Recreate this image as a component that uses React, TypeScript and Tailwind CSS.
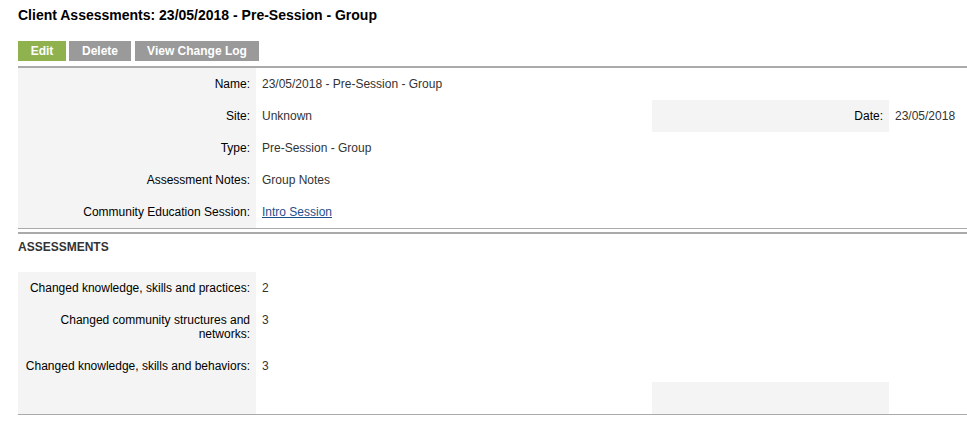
import React from 'react';

type Row = { label: string; value: React.ReactNode; label2?: string; value2?: string };

const details: Row[] = [
  { label: 'Name:', value: '23/05/2018 - Pre-Session - Group' },
  { label: 'Site:', value: 'Unknown', label2: 'Date:', value2: '23/05/2018' },
  { label: 'Type:', value: 'Pre-Session - Group' },
  { label: 'Assessment Notes:', value: 'Group Notes' },
  {
    label: 'Community Education Session:',
    value: (
      <a href="#" className="text-[#1f4e8c] underline">
        Intro Session
      </a>
    ),
  },
];

const scores = [
  { label: 'Changed knowledge, skills and practices:', value: '2' },
  { label: 'Changed community structures and networks:', value: '3' },
  { label: 'Changed knowledge, skills and behaviors:', value: '3' },
];

function FieldRow({ row }: { row: Row }) {
  return (
    <>
      <div className="bg-[#f4f4f4] py-[9px] pr-[6px] pl-[2px] text-right text-black">{row.label}</div>
      <div className="py-[9px] px-[6px] text-[#333]">{row.value}</div>
      <div className={`py-[9px] pr-[6px] text-right text-black ${row.label2 ? 'bg-[#f4f4f4]' : ''}`}>
        {row.label2}
      </div>
      <div className="py-[9px] px-[6px] text-[#333] whitespace-nowrap">{row.value2}</div>
    </>
  );
}

export default function App() {
  return (
    <div className="bg-white min-h-[429px] pl-[18px] pt-[7px] text-[12px] leading-[14px] font-['Liberation_Sans',Arial,sans-serif]">
      <h1 className="text-[14px] leading-[17px] font-bold text-black">
        Client Assessments: 23/05/2018 - Pre-Session - Group
      </h1>

      <div className="mt-[17px] flex">
        <button className="h-5 w-12 bg-[#8fb24f] text-white font-bold">Edit</button>
        <button className="h-5 w-[62px] ml-[3px] bg-[#9a9a9a] text-white font-bold">Delete</button>
        <button className="h-5 w-[124px] ml-1 bg-[#9a9a9a] text-white font-bold">View Change Log</button>
      </div>

      {/* Details */}
      <div className="mt-[5px] border-t-2 border-[#aaa] border-b border-b-[#aaa] grid grid-cols-[238px_396px_237px_1fr]">
        {details.map((r) => (
          <FieldRow key={r.label} row={r} />
        ))}
      </div>
      <div className="mt-[3px] border-t-2 border-[#aaa]" />

      <h2 className="mt-[6px] font-bold text-[#333] uppercase">Assessments</h2>

      {/* Assessment scores */}
      <div className="mt-[18px] border-b border-[#aaa] grid grid-cols-[238px_396px_237px_1fr]">
        {scores.map((s) => (
          <FieldRow key={s.label} row={{ label: s.label, value: s.value }} />
        ))}
        <div className="bg-[#f4f4f4] h-8" />
        <div />
        <div className="bg-[#f4f4f4]" />
        <div />
      </div>
    </div>
  );
}
